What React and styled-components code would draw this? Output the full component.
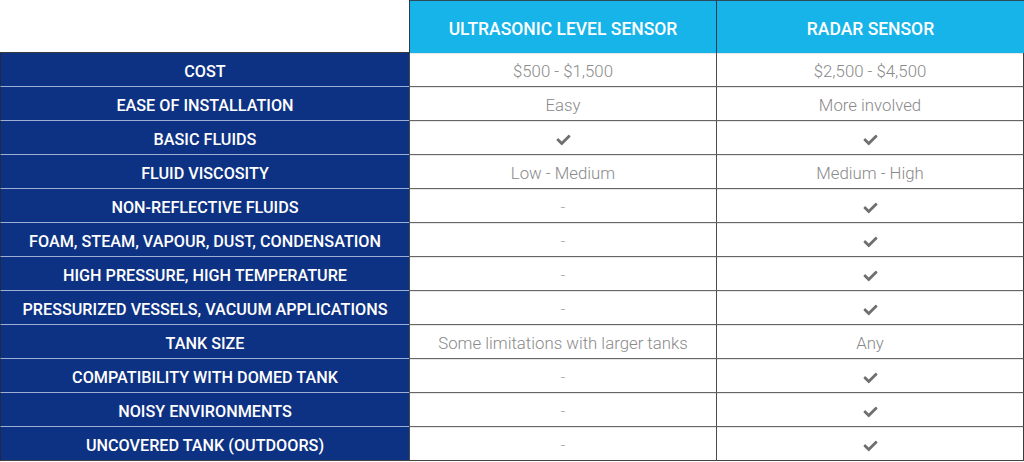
import styled, { createGlobalStyle } from 'styled-components';
import { FaCheck } from 'react-icons/fa';

const rows = [
  ['COST', '$500 - $1,500', '$2,500 - $4,500'],
  ['EASE OF INSTALLATION', 'Easy', 'More involved'],
  ['BASIC FLUIDS', true, true],
  ['FLUID VISCOSITY', 'Low - Medium', 'Medium - High'],
  ['NON-REFLECTIVE FLUIDS', '-', true],
  ['FOAM, STEAM, VAPOUR, DUST, CONDENSATION', '-', true],
  ['HIGH PRESSURE, HIGH TEMPERATURE', '-', true],
  ['PRESSURIZED VESSELS, VACUUM APPLICATIONS', '-', true],
  ['TANK SIZE', 'Some limitations with larger tanks', 'Any'],
  ['COMPATIBILITY WITH DOMED TANK', '-', true],
  ['NOISY ENVIRONMENTS', '-', true],
  ['UNCOVERED TANK (OUTDOORS)', '-', true],
];

function Value({ v }) {
  if (v === true) {
    return (
      <Cell $icon>
        <Check />
      </Cell>
    );
  }
  return <Cell $dash={v === '-'}>{v}</Cell>;
}

export default function App() {
  return (
    <>
      <Global />
      <Table>
        <Corner />
        <Head>ULTRASONIC LEVEL SENSOR</Head>
        <Head>RADAR SENSOR</Head>
        {rows.map(([label, a, b], i) => (
          <Row key={label} $last={i === rows.length - 1}>
            <Label>{label}</Label>
            <Value v={a} />
            <Value v={b} />
          </Row>
        ))}
      </Table>
    </>
  );
}

const Global = createGlobalStyle`
  body {
    margin: 0;
    background: #fff;
    font-family: Roboto, "Liberation Sans", sans-serif;
  }
`;

const Table = styled.div`
  display: grid;
  grid-template-columns: 409px 307px 308px;
  grid-template-rows: 53px repeat(12, 34px);
  width: 1024px;
`;

const Corner = styled.div`
  background: #fff;
  border-bottom: 1px solid #3a3a3a;
`;

const Head = styled.div`
  background: #17b4e9;
  color: #fff;
  font-size: 17.5px;
  font-weight: 500;
  display: flex;
  align-items: center;
  justify-content: center;
  padding-top: 3px;
  border-top: 1px solid #2f4a5a;
  border-left: 1px solid #2b3a44;
  &:last-of-type {
    border-right: 1px solid #2b3a44;
  }
`;

const Row = styled.div`
  display: contents;
  & > div {
    border-bottom: 1px solid ${(p) => (p.$last ? '#444' : '#666')};
  }
  & > div:first-child {
    border-bottom-color: ${(p) => (p.$last ? '#444' : '#9eaed4')};
  }
`;

const Label = styled.div`
  background: #0e3283;
  color: #fff;
  font-size: 16.2px;
  font-weight: 500;
  display: flex;
  align-items: center;
  justify-content: center;
  padding-top: 4px;
  border-left: 1px solid #1d2a4a;
`;

const Cell = styled.div`
  color: ${(p) => (p.$dash ? '#aaa' : '#8a8a8a')};
  font-size: 16.8px;
  font-weight: 300;
  display: flex;
  align-items: center;
  justify-content: center;
  padding-top: ${(p) => (p.$icon ? '5px' : '3px')};
  border-left: 1px solid #4a4a4a;
  box-shadow: inset 0 1px 0 #e6e6e6;
  &:last-child {
    border-right: 1px solid #3a3a3a;
  }
`;

const Check = styled(FaCheck)`
  color: #6f6f6f;
  width: 17px;
  height: 14px;
`;
